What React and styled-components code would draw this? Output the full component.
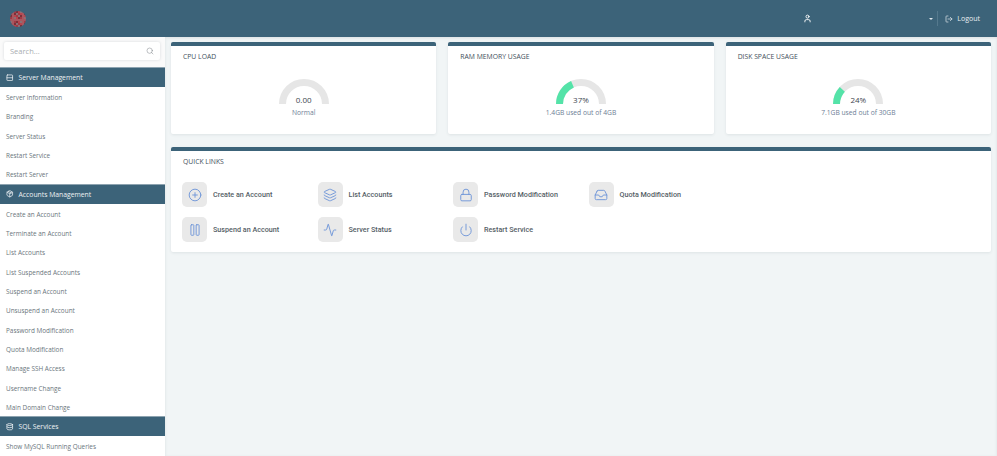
import styled, { createGlobalStyle } from "styled-components";
import {
	Activity,
	CirclePlus,
	Database,
	Inbox,
	Layers,
	Lock,
	LogOut,
	Package,
	Pause,
	Power,
	Rows2,
	Search,
	User,
} from "lucide-react";

const GlobalStyle = createGlobalStyle`
	html, body {
		margin: 0;
		height: 100%;
		overflow: hidden;
		background: #f1f5f6;
		font-family: "Open Sans", "Liberation Sans", sans-serif;
	}
	* {
		box-sizing: border-box;
	}
`;

const Page = styled.div`
	width: 997px;
	height: 456px;
	display: flex;
	flex-direction: column;
	overflow: hidden;
`;

const Header = styled.header`
	height: 37px;
	flex: none;
	display: flex;
	align-items: center;
	padding: 0 17px 0 10px;
	background: #3c6379;
	color: #fff;
`;

const UserMenu = styled.div`
	margin-left: auto;
	width: 130px;
	display: flex;
	align-items: center;
	justify-content: space-between;
`;

const Caret = styled.span`
	width: 0;
	height: 0;
	border-left: 2px solid transparent;
	border-right: 2px solid transparent;
	border-top: 2px solid #dfe6ea;
`;

const HeaderDivider = styled.span`
	width: 1px;
	height: 15px;
	margin: 0 7px 0 4px;
	background: #55798d;
`;

const Logout = styled.div`
	display: flex;
	align-items: center;
	gap: 4px;
	font-size: 7px;
	color: #e9eef1;
`;

const Body = styled.div`
	flex: 1;
	min-height: 0;
	display: flex;
`;

const Sidebar = styled.aside`
	width: 165px;
	flex: none;
	background: #fff;
	overflow: hidden;
`;

const SearchArea = styled.div`
	height: 30px;
	padding: 5px 5px 0 4px;
	background: #fafafa;
`;

const SearchBox = styled.div`
	height: 18px;
	display: flex;
	align-items: center;
	justify-content: space-between;
	padding: 0 6px;
	background: #fff;
	border-radius: 2px;
	box-shadow: 0 0 3px rgba(60, 80, 90, 0.18);
	font-size: 7.5px;
	color: #a9adb1;
`;

const SectionBar = styled.div`
	height: 20px;
	display: flex;
	align-items: center;
	gap: 5px;
	padding-left: 6px;
	background: #3c6379;
	border-top: 1px solid #8da3b0;
	font-size: 6.8px;
	color: #eef2f4;
`;

const MenuItem = styled.div`
	height: 19.33px;
	display: flex;
	align-items: center;
	padding: 2px 0 0 6px;
	font-size: 6.4px;
	color: #6a757c;
`;

const Main = styled.main`
	flex: 1;
	min-width: 0;
	padding: 5px 6px;
	display: flex;
	flex-direction: column;
	gap: 13px;
	box-shadow: inset 0 1px 3px rgba(60, 80, 90, 0.12);
`;

const StatsRow = styled.div`
	display: grid;
	grid-template-columns: repeat(3, minmax(0, 1fr));
	gap: 12px;
`;

const Card = styled.section`
	height: ${(props) => props.$height}px;
	background: #fff;
	border-top: 4px solid #3c6379;
	border-radius: 2px;
	box-shadow: 0 1px 3px rgba(60, 80, 90, 0.1);
`;

const CardTitle = styled.h2`
	margin: 0;
	padding: 4px 12px 0;
	height: 15px;
	line-height: 14px;
	font-size: 6.8px;
	font-weight: 400;
	color: #3f4f5b;
`;

const GaugeBlock = styled.div`
	margin-top: 18px;
	display: flex;
	flex-direction: column;
	align-items: center;
`;

const GaugeWrap = styled.div`
	position: relative;
	width: 50px;
	height: 25px;
`;

const GaugeValue = styled.span`
	position: absolute;
	left: 0;
	right: 0;
	bottom: -1px;
	text-align: center;
	font-size: 8px;
	line-height: 10px;
	color: #3d4650;
`;

const GaugeNote = styled.span`
	margin-top: 4px;
	font-size: 6.7px;
	line-height: 10px;
	color: #6d7e96;
`;

const LinksGrid = styled.div`
	margin-top: 16px;
	padding: 0 11px;
	display: grid;
	grid-template-columns: repeat(4, 135.5px);
	row-gap: 10px;
`;

const QuickLink = styled.div`
	display: flex;
	align-items: center;
	gap: 6px;
	font-family: Roboto, "Liberation Sans", sans-serif;
	font-size: 7.2px;
	font-weight: 500;
	color: #555e66;
`;

const IconBox = styled.span`
	width: 25px;
	height: 25px;
	display: flex;
	align-items: center;
	justify-content: center;
	background: #e9e9e9;
	border-radius: 5px;
	color: #6f96d8;
`;

const sections = [
	{
		title: "Server Management",
		icon: Rows2,
		items: [
			"Server Information",
			"Branding",
			"Server Status",
			"Restart Service",
			"Restart Server",
		],
	},
	{
		title: "Accounts Management",
		icon: Package,
		items: [
			"Create an Account",
			"Terminate an Account",
			"List Accounts",
			"List Suspended Accounts",
			"Suspend an Account",
			"Unsuspend an Account",
			"Password Modification",
			"Quota Modification",
			"Manage SSH Access",
			"Username Change",
			"Main Domain Change",
		],
	},
	{
		title: "SQL Services",
		icon: Database,
		items: ["Show MySQL Running Queries"],
	},
];

const stats = [
	{ title: "CPU LOAD", value: "0.00", note: "Normal", percent: 0 },
	{ title: "RAM MEMORY USAGE", value: "37%", note: "1.4GB used out of 4GB", percent: 37 },
	{ title: "DISK SPACE USAGE", value: "24%", note: "7.1GB used out of 30GB", percent: 24 },
];

const links = [
	{ label: "Create an Account", icon: CirclePlus },
	{ label: "List Accounts", icon: Layers },
	{ label: "Password Modification", icon: Lock },
	{ label: "Quota Modification", icon: Inbox },
	{ label: "Suspend an Account", icon: Pause },
	{ label: "Server Status", icon: Activity },
	{ label: "Restart Service", icon: Power },
];

const logoColors = ["#8d6f75", "#b8444e", "#7a3039", "#a33a45", "#a9575f"];

const Logo = () => {
	const specks = [];
	for (let y = 0; y < 16; y += 2) {
		for (let x = 0; x < 16; x += 2) {
			specks.push(
				<rect
					key={`${x}-${y}`}
					x={x}
					y={y}
					width='2'
					height='2'
					fill={logoColors[(x * 7 + y * 3 + (x * y) % 5) % logoColors.length]}
				/>
			);
		}
	}
	return (
		<svg width='16' height='16' viewBox='0 0 16 16'>
			<clipPath id='logo-disc'>
				<circle cx='8' cy='8' r='8' />
			</clipPath>
			<g clipPath='url(#logo-disc)'>{specks}</g>
		</svg>
	);
};

const Gauge = ({ percent }) => {
	const r = 21.5;
	const angle = Math.PI * (1 - percent / 100);
	const x = 25 + r * Math.cos(angle);
	const y = 25 - r * Math.sin(angle);
	return (
		<svg width='50' height='25' viewBox='0 0 50 25'>
			<path d={`M3.5 25A${r} ${r} 0 0 1 46.5 25`} fill='none' stroke='#e6e6e6' strokeWidth='7' />
			{percent > 0 && (
				<path d={`M3.5 25A${r} ${r} 0 0 1 ${x} ${y}`} fill='none' stroke='#54e3a8' strokeWidth='7' />
			)}
		</svg>
	);
};

const App = () => {
	return (
		<Page>
			<GlobalStyle />
			<Header>
				<Logo />
				<UserMenu>
					<User size={9} strokeWidth={2.4} />
					<Caret />
				</UserMenu>
				<HeaderDivider />
				<Logout>
					<LogOut size={8} />
					Logout
				</Logout>
			</Header>
			<Body>
				<Sidebar>
					<SearchArea>
						<SearchBox>
							Search...
							<Search size={8} strokeWidth={1.5} color='#7d8388' />
						</SearchBox>
					</SearchArea>
					{sections.map((section) => (
						<div key={section.title}>
							<SectionBar>
								<section.icon size={7.5} strokeWidth={2.4} />
								{section.title}
							</SectionBar>
							{section.items.map((item) => (
								<MenuItem key={item}>{item}</MenuItem>
							))}
						</div>
					))}
				</Sidebar>
				<Main>
					<StatsRow>
						{stats.map((stat) => (
							<Card key={stat.title} $height={92}>
								<CardTitle>{stat.title}</CardTitle>
								<GaugeBlock>
									<GaugeWrap>
										<Gauge percent={stat.percent} />
										<GaugeValue>{stat.value}</GaugeValue>
									</GaugeWrap>
									<GaugeNote>{stat.note}</GaugeNote>
								</GaugeBlock>
							</Card>
						))}
					</StatsRow>
					<Card $height={105}>
						<CardTitle>QUICK LINKS</CardTitle>
						<LinksGrid>
							{links.map((link) => (
								<QuickLink key={link.label}>
									<IconBox>
										<link.icon size={14} strokeWidth={1.6} />
									</IconBox>
									{link.label}
								</QuickLink>
							))}
						</LinksGrid>
					</Card>
				</Main>
			</Body>
		</Page>
	);
};

export default App;
